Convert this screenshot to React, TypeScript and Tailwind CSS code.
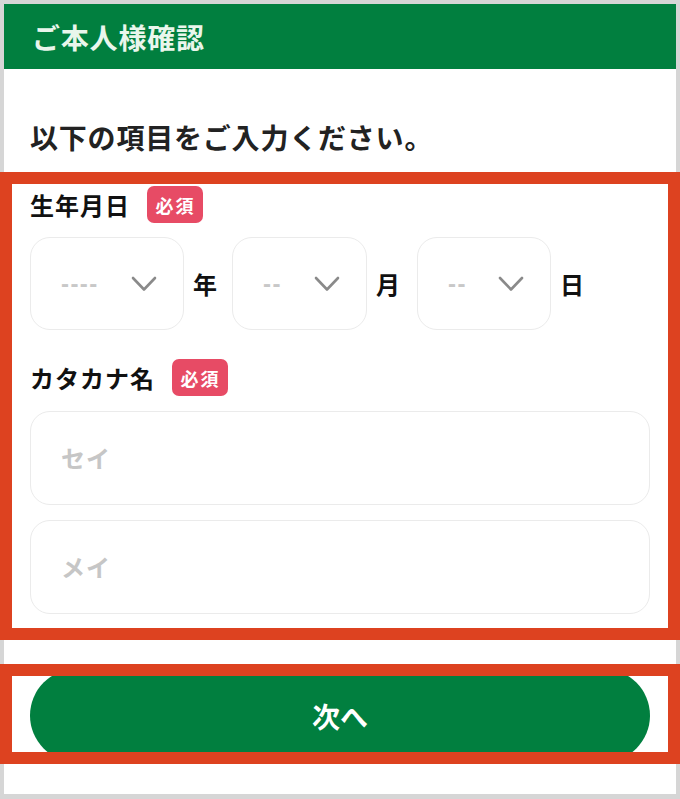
import { Fragment } from "react";

const dateParts = [
  { placeholder: "----", unit: "年", width: "w-[154px]", gap: "" },
  { placeholder: "--", unit: "月", width: "w-[135px]", gap: "ml-[15px]" },
  { placeholder: "--", unit: "日", width: "w-[134px]", gap: "ml-[17px]" },
];

function Chevron() {
  return (
    <svg width="26" height="16" viewBox="0 0 26 16" fill="none" className="shrink-0">
      <polyline points="2,2 13,13.5 24,2" stroke="#8a8a8a" strokeWidth="2.6" strokeLinecap="round" strokeLinejoin="round" />
    </svg>
  );
}

function Badge() {
  return (
    <span className="inline-flex h-[37px] w-[56px] items-center justify-center rounded-[7px] bg-[#e74b65] pl-[1px] text-[18px] font-bold leading-none tracking-[2px] text-white">
      必須
    </span>
  );
}

function Label({ text }: { text: string }) {
  return (
    <div className="flex items-center gap-[17px]">
      <span className="text-[24px] font-bold leading-none tracking-[1px] text-[#111]">{text}</span>
      <Badge />
    </div>
  );
}

export default function App() {
  return (
    <div className="relative h-[799px] w-[680px] overflow-hidden bg-[#d6d6d6] p-[4px] font-['Noto_Sans_CJK_JP',sans-serif]">
      <div className="h-[790px] bg-white">
        <header className="flex h-[65px] items-center bg-[#017f3f] px-[28px]">
          <h1 className="text-[28px] font-bold leading-none tracking-[0.8px] text-[#e9f6ec]">ご本人様確認</h1>
        </header>

        <div className="px-[26px]">
          <p className="mt-[47px] text-[28px] font-bold leading-[42px] tracking-[0.8px] text-[#222]">
            以下の項目をご入力ください。
          </p>

          <div className="mt-[28px]">
            <Label text="生年月日" />
            <div className="mt-[14px] flex items-center">
              {dateParts.map((p) => (
                <Fragment key={p.unit}>
                  <div
                    className={`${p.width} ${p.gap} flex h-[93px] items-center justify-between rounded-[20px] border-[1.5px] border-[#ebebeb] pl-[30px] pr-[26px]`}
                  >
                    <span className="font-['Liberation_Sans',sans-serif] text-[24px] font-bold leading-none tracking-[1.4px] text-[#c8c8c8]">
                      {p.placeholder}
                    </span>
                    <Chevron />
                  </div>
                  <span className="ml-[9px] text-[24px] font-bold leading-none text-[#111]">{p.unit}</span>
                </Fragment>
              ))}
            </div>
          </div>

          <div className="mt-[29px]">
            <Label text="カタカナ名" />
            <div className="mt-[15px] flex flex-col gap-[15px]">
              {["セイ", "メイ"].map((ph) => (
                <div
                  key={ph}
                  className="flex h-[94px] items-center rounded-[20px] border-[1.5px] border-[#ebebeb] px-[30px] text-[24px] font-bold tracking-[1px] text-[#c6c6c6]"
                >
                  {ph}
                </div>
              ))}
            </div>
          </div>

          <button className="mt-[55px] flex h-[93px] w-full items-center justify-center rounded-full bg-[#017f3f] text-[28px] font-bold text-white">
            次へ
          </button>
        </div>
      </div>

      <div className="pointer-events-none absolute left-0 top-[172px] h-[468px] w-[680px] border-[12px] border-[#dd4220]" />
      <div className="pointer-events-none absolute left-0 top-[664px] h-[100px] w-[680px] border-[12px] border-[#dd4220]" />
    </div>
  );
}
